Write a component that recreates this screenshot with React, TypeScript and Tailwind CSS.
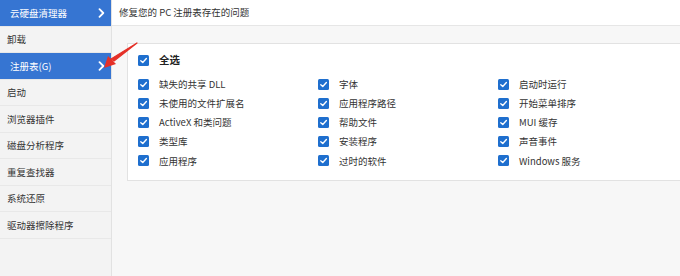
import React from "react";

const sidebar = [
  { label: "云硬盘清理器", active: true },
  { label: "卸载" },
  { label: "注册表(G)", active: true },
  { label: "启动" },
  { label: "浏览器插件" },
  { label: "磁盘分析程序" },
  { label: "重复查找器" },
  { label: "系统还原" },
  { label: "驱动器擦除程序" },
];

const cols = [
  ["缺失的共享 DLL", "未使用的文件扩展名", "ActiveX 和类问题", "类型库", "应用程序"],
  ["字体", "应用程序路径", "帮助文件", "安装程序", "过时的软件"],
  ["启动时运行", "开始菜单排序", "MUI 缓存", "声音事件", "Windows 服务"],
];

function Check() {
  return (
    <span className="flex h-[11px] w-[11px] shrink-0 items-center justify-center rounded-[1.5px] bg-[#1f6fce]">
      <svg width="9" height="9" viewBox="0 0 10 10">
        <path d="M2 5.2 L4.2 7.3 L8.2 2.8" fill="none" stroke="white" strokeWidth="1.5" strokeLinecap="round" strokeLinejoin="round" />
      </svg>
    </span>
  );
}

function Chevron() {
  return (
    <svg width="7" height="10" viewBox="0 0 7 10" className="absolute left-[98px] top-1/2 -translate-y-1/2">
      <path d="M1.5 1.2 L5.3 5 L1.5 8.8" fill="none" stroke="white" strokeWidth="1.8" strokeLinecap="round" strokeLinejoin="round" />
    </svg>
  );
}

export default function App() {
  return (
    <div
      className="relative flex h-[276px] w-[680px] overflow-hidden bg-[#f7f7f7] text-[9.5px] text-[#333]"
      style={{ fontFamily: '"Noto Sans CJK SC", "Noto Sans", sans-serif' }}
    >
      <div className="flex w-[112px] shrink-0 flex-col border-r border-[#e2e2e2] bg-[#f3f3f3]">
        {sidebar.map((s) => (
          <div
            key={s.label}
            className={
              s.active
                ? "relative flex h-[26.5px] items-center border-b border-[#e8e8e8] bg-[#3675d2] pl-[10px] text-white"
                : "relative flex h-[26.5px] items-center border-b border-[#e8e8e8] pl-[7px] text-[#333]"
            }
          >
            {s.label}
            {s.active && <Chevron />}
          </div>
        ))}
      </div>
      <div className="flex min-w-0 flex-1 flex-col">
        <div className="flex h-[26px] shrink-0 items-center border-b border-[#e6e6e6] bg-white pl-[7px] text-[9.5px] text-[#333]">
          修复您的 PC 注册表存在的问题
        </div>
        <div className="pl-[15px] pt-[17px]">
          <div className="w-[600px] border border-[#e2e2e2] bg-white pb-[13px] pl-[10px] pt-[10px]">
            <div className="flex h-[12px] items-center gap-[10px]">
              <Check />
              <span className="text-[10.5px] font-bold text-[#222]">全选</span>
            </div>
            <div className="mt-[12px] flex">
              {cols.map((col, i) => (
                <div key={i} className="flex w-[180px] flex-col gap-[7.2px]">
                  {col.map((t) => (
                    <div key={t} className="flex h-[12px] items-center gap-[10px]">
                      <Check />
                      <span className="whitespace-nowrap">{t}</span>
                    </div>
                  ))}
                </div>
              ))}
            </div>
          </div>
        </div>
      </div>
      <svg className="pointer-events-none absolute left-0 top-0" width="680" height="276">
        <path d="M137 43 L114 61 L111 59 Z" fill="#e53028" stroke="#e53028" strokeWidth="1.2" strokeLinejoin="round" />
        <polygon points="104,68 108,56 116,64" fill="#e53028" />
      </svg>
    </div>
  );
}
